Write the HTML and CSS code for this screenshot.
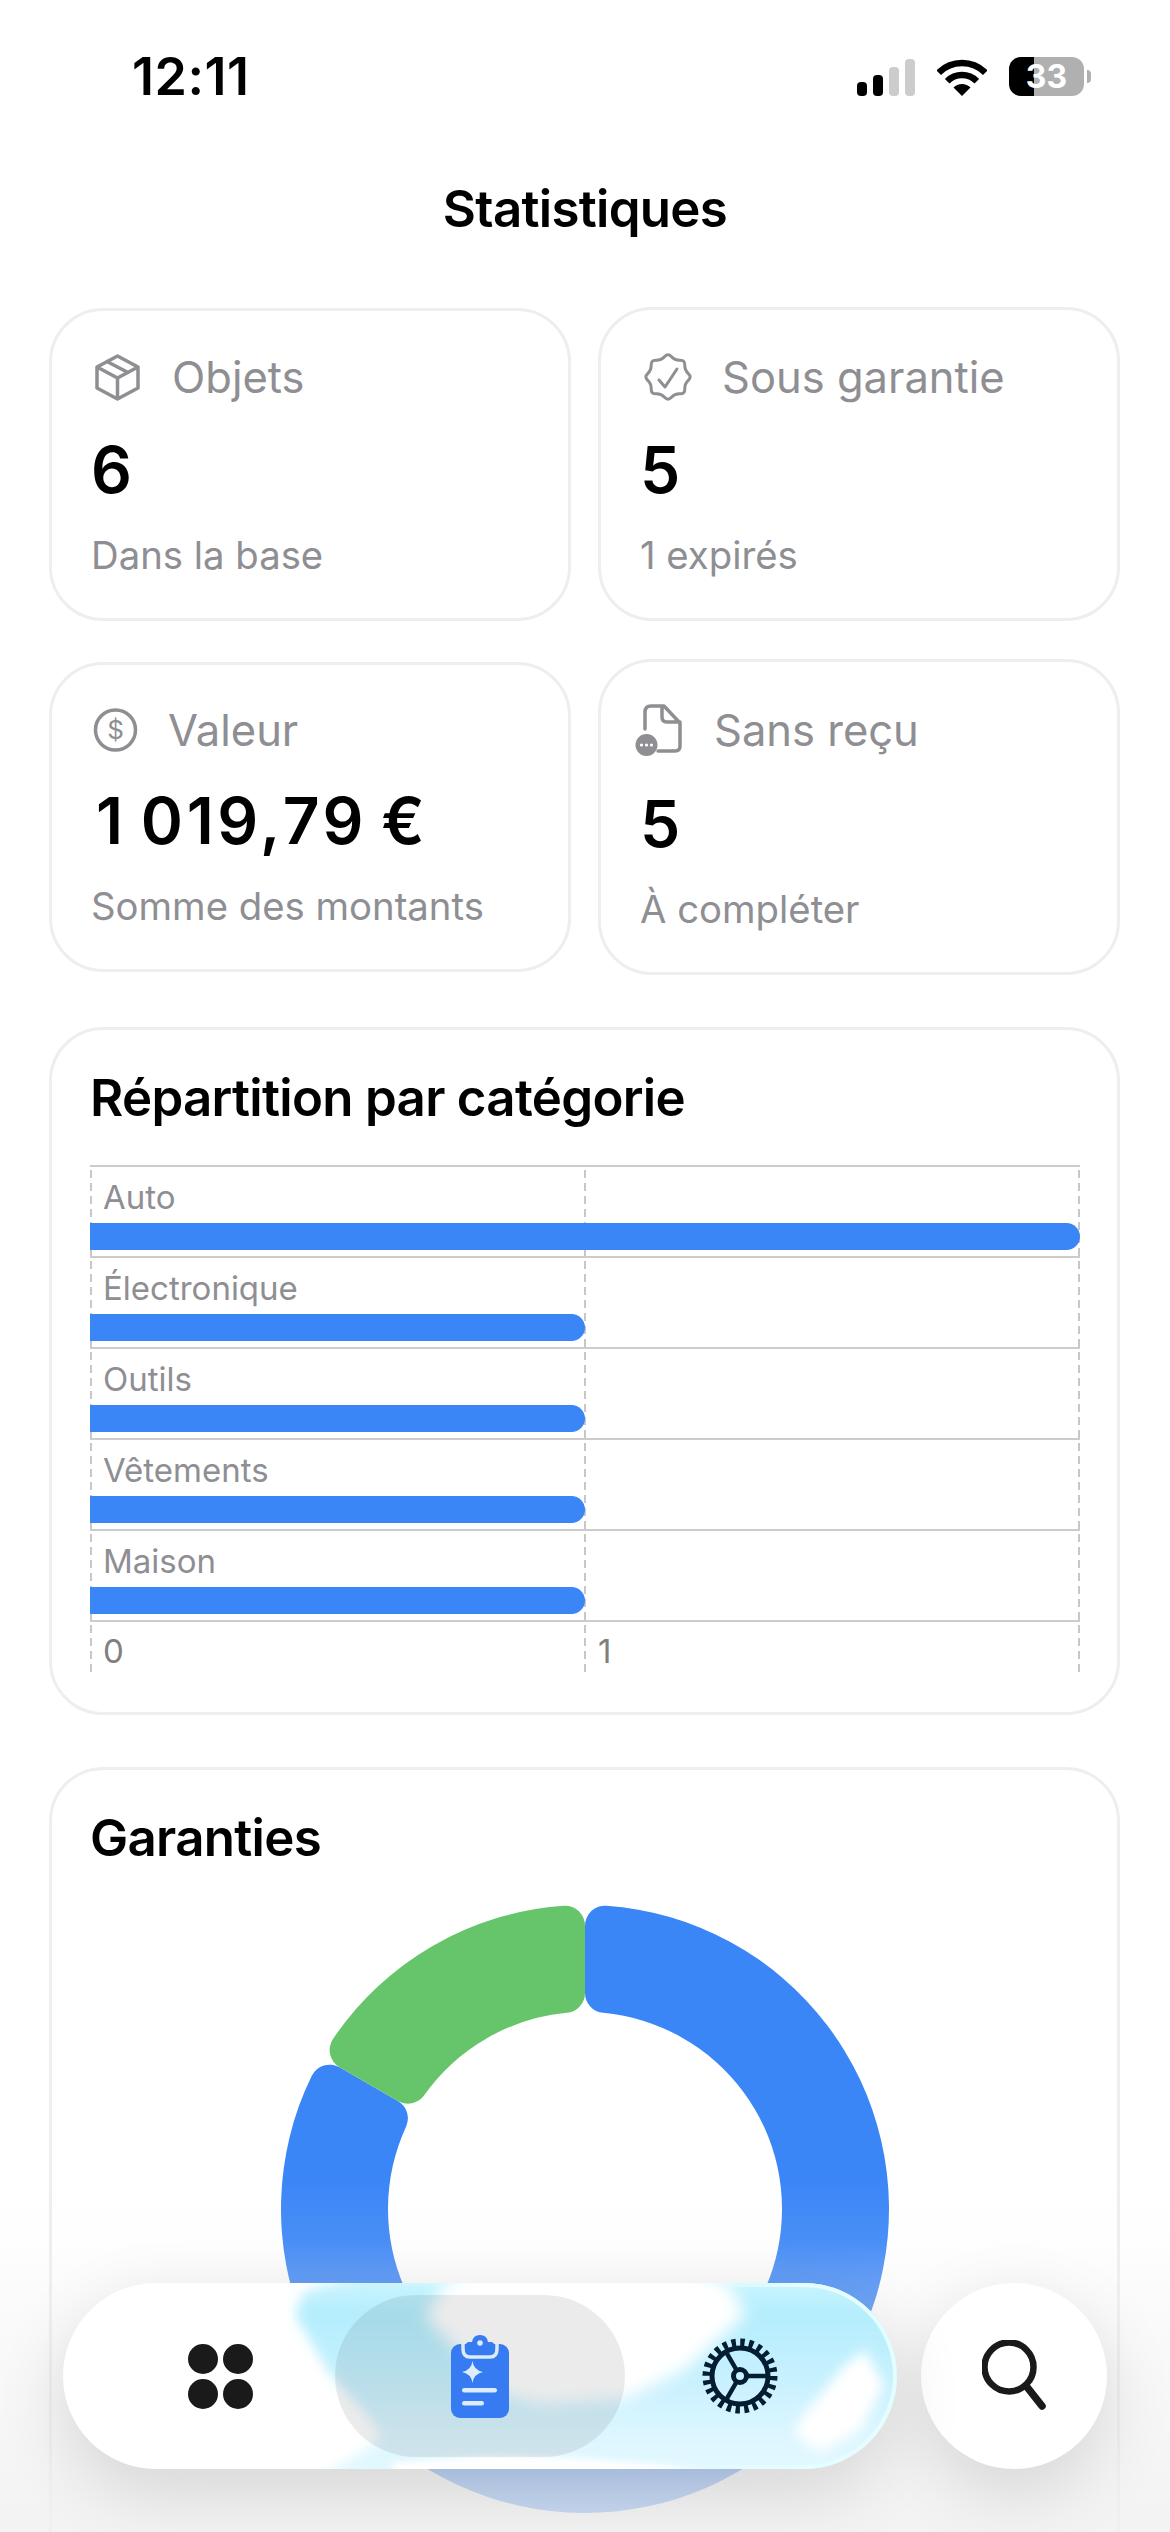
FILE: index.html
```html
<!DOCTYPE html>
<html lang="fr">
<head>
<meta charset="utf-8">
<title>Statistiques</title>
<link rel="stylesheet" href="styles.css">
</head>
<body>
<div class="screen">
  <header class="status">
    <span class="time">12:11</span>
    <div class="status-icons">
      <div class="signal">
        <i class="sig s1"></i><i class="sig s2"></i><i class="sig s3"></i><i class="sig s4"></i>
      </div>
      <svg class="wifi" viewBox="0 0 50 37" width="50" height="37">
        <path d="M1.7 13.7A33 33 0 0 1 48.3 13.7" fill="none" stroke="#000" stroke-width="6.5"/>
        <path d="M10.2 22.2A21 21 0 0 1 39.8 22.2" fill="none" stroke="#000" stroke-width="6.5"/>
        <path d="M25 37L16.5 28.5A12 12 0 0 1 33.5 28.5Z" fill="#000"/>
      </svg>
      <div class="battery"><div class="batt-body">33</div><i class="batt-tip"></i></div>
    </div>
  </header>

  <h1 class="page-title">Statistiques</h1>

  <main class="content">
    <section class="stat-row first">
      <article class="card stat">
        <div class="stat-head">
          <svg class="ico ic-box" viewBox="0 0 45 47" width="45" height="47"><path d="M22.5 2L43 13V34L22.5 45L2 34V13ZM2 13L22.5 24L43 13M22.5 24V45M12 7.5L33 18.5"/></svg>
          <span class="stat-label">Objets</span>
        </div>
        <div class="stat-value">6</div>
        <div class="stat-sub">Dans la base</div>
      </article>
      <article class="card stat">
        <div class="stat-head">
          <svg class="ico ic-badge" viewBox="0 0 50 48" width="50" height="48"><path d="M21.55 3.7Q25 0 28.45 3.7Q31.9 7.4 36.95 7.2Q42 7 41.8 12.05Q41.6 17.1 45.3 20.55Q49 24 45.3 27.45Q41.6 30.9 41.8 35.95Q42 41 36.95 40.8Q31.9 40.6 28.45 44.3Q25 48 21.55 44.3Q18.1 40.6 13.05 40.8Q8 41 8.2 35.95Q8.4 30.9 4.7 27.45Q1 24 4.7 20.55Q8.4 17.1 8.2 12.05Q8 7 13.05 7.2Q18.1 7.4 21.55 3.7ZM16 27L22 34L34 16"/></svg>
          <span class="stat-label">Sous garantie</span>
        </div>
        <div class="stat-value">5</div>
        <div class="stat-sub">1 expirés</div>
      </article>
    </section>

    <section class="stat-row">
      <article class="card stat">
        <div class="stat-head">
          <svg class="ico ic-coin" viewBox="0 0 45 44" width="45" height="44"><circle cx="22.500" cy="22" r="20"/><text class="coin-sign" x="22.500" y="31" text-anchor="middle">$</text></svg>
          <span class="stat-label">Valeur</span>
        </div>
        <div class="stat-value amount">1&#8201;019,79&#8201;€</div>
        <div class="stat-sub">Somme des montants</div>
      </article>
      <article class="card stat">
        <div class="stat-head">
          <svg class="ico ic-doc" viewBox="0 0 47 52" width="47" height="52"><path d="M10 25V8Q10 2 16 2H29L45 19V42Q45 47 40 47H23M27 2V13Q27 18 32 18H45"/><circle class="doc-badge" cx="11.500" cy="41" r="11"/><circle class="doc-dot" cx="6.500" cy="41" r="1.600"/><circle class="doc-dot" cx="11.500" cy="41" r="1.600"/><circle class="doc-dot" cx="16.500" cy="41" r="1.600"/></svg>
          <span class="stat-label">Sans reçu</span>
        </div>
        <div class="stat-value">5</div>
        <div class="stat-sub">À compléter</div>
      </article>
    </section>

    <section class="card panel">
      <h2 class="panel-title">Répartition par catégorie</h2>
      <div class="plot">
        <i class="vline v0"></i><i class="vline v1"></i><i class="vline v2"></i>
        <div class="plot-row"><span class="plot-label">Auto</span><div class="bar full"></div></div>
        <div class="plot-row"><span class="plot-label">Électronique</span><div class="bar half"></div></div>
        <div class="plot-row"><span class="plot-label">Outils</span><div class="bar half"></div></div>
        <div class="plot-row"><span class="plot-label">Vêtements</span><div class="bar half"></div></div>
        <div class="plot-row"><span class="plot-label">Maison</span><div class="bar half"></div></div>
        <div class="plot-axis"><span>0</span><span>1</span></div>
      </div>
    </section>

    <section class="card panel garanties">
      <h2 class="panel-title">Garanties</h2>
      <svg class="donut" viewBox="-304 -304 608 608" width="608" height="608">
        <path class="seg-blue" d="M0 -283.290A20 20 0 0 1 21.410 -303.250A304 304 0 1 1 -273.330 -133.090A20 20 0 0 1 -245.340 -141.650L-187.130 -108.040A20 20 0 0 1 -178.960 -82.340A197 197 0 1 0 18.160 -196.160A20 20 0 0 1 0 -216.080Z"/>
        <path class="seg-green" d="M-245.340 -141.650A20 20 0 0 1 -251.870 -170.240A304 304 0 0 1 -21.410 -303.250A20 20 0 0 1 0 -283.290L0 -216.080A20 20 0 0 1 -18.160 -196.160A197 197 0 0 0 -160.790 -113.820A20 20 0 0 1 -187.130 -108.040Z"/>
      </svg>
      <div class="legend"><span>Actif</span><span>Expiré</span></div>
    </section>
  </main>

  <div class="fade"></div>

  <nav class="dock">
    <div class="tabbar">
      <svg class="glass" viewBox="0 0 834 186" width="834" height="186">
        <defs>
          <linearGradient id="cy" x1="0" y1="0" x2="0" y2="1">
            <stop offset="0" stop-color="#cdf5fe"/>
            <stop offset=".18" stop-color="#b4eefd"/>
            <stop offset=".5" stop-color="#c8f1fe"/>
            <stop offset=".8" stop-color="#dff7ff"/>
            <stop offset="1" stop-color="#e4f9ff"/>
          </linearGradient>
          <linearGradient id="rim" x1="0" y1="0" x2="1" y2="0">
            <stop offset=".75" stop-color="#e4fdff" stop-opacity="0"/>
            <stop offset=".88" stop-color="#e4fdff"/>
          </linearGradient>
          <filter id="b8" x="-20%" y="-20%" width="140%" height="140%"><feGaussianBlur stdDeviation="8"/></filter>
          <filter id="b6" x="-20%" y="-20%" width="140%" height="140%"><feGaussianBlur stdDeviation="6"/></filter>
          <filter id="b3" x="-20%" y="-20%" width="140%" height="140%"><feGaussianBlur stdDeviation="3"/></filter>
        </defs>
        <path fill="url(#cy)" filter="url(#b6)" d="M232 32L240 10L262 2L300 -6H860V200H247L310 162L318 152L304 132L266 90Z"/>
        <path fill="#fff" filter="url(#b8)" d="M362 34L382 0L417 -14H637L667 3L683 32L622 87L560 117L477 122L434 110Z"/>
        <path fill="#fff" filter="url(#b6)" d="M802 67L821 102L797 147L757 169L732 152L737 137L782 82Z"/>
        <path fill="#fff" filter="url(#b3)" d="M330 196L330 180L430 172L510 175L600 182L680 196Z"/>
        <rect x="2" y="2" width="830" height="182" rx="91" fill="none" stroke="url(#rim)" stroke-width="4"/>
      </svg>
      <div class="tab">
        <svg viewBox="0 0 65 65" width="65" height="65"><g class="dots"><circle cx="15" cy="15" r="15"/><circle cx="50" cy="15" r="15"/><circle cx="15" cy="50" r="15"/><circle cx="50" cy="50" r="15"/></g></svg>
      </div>
      <div class="tab active">
        <svg viewBox="0 0 58 83" width="58" height="83">
          <rect class="clip-body" x="0" y="9" width="58" height="74" rx="9"/>
          <path class="clip-cut" d="M12 9V14Q12 22 19 22H39Q46 22 46 14V9"/>
          <path class="clip-top" d="M15 10Q15 7 18 7H21Q22 0 29 0Q36 0 37 7H40Q43 7 43 10V15Q43 18 40 18H18Q15 18 15 15Z"/>
          <circle class="clip-hole" cx="29" cy="8" r="2.800"/>
          <path class="clip-mark" d="M21.500 26Q22.500 35 32 37Q22.500 39 21.500 48Q20.500 39 11 37Q20.500 35 21.500 26Z"/>
          <rect class="clip-mark" x="11" y="53" width="35" height="4.500" rx="2.200"/>
          <rect class="clip-mark" x="11" y="66" width="22" height="4.500" rx="2.200"/>
        </svg>
      </div>
      <div class="tab">
        <svg class="gear" viewBox="0 0 76 76" width="76" height="76">
          <circle class="g-teeth" cx="38" cy="38" r="33"/>
          <circle class="g-ring" cx="38" cy="38" r="28"/>
          <circle class="g-hub" cx="38" cy="38" r="6.500"/>
          <path class="g-spoke" d="M45 38H66M34.500 32L24 13.800M34.500 44L24 62.200"/>
        </svg>
      </div>
    </div>
    <div class="search-btn">
      <svg viewBox="0 0 64 72" width="64" height="72"><circle class="lens" cx="27" cy="27" r="24.500"/><path class="handle" d="M45 47L60 66"/></svg>
    </div>
  </nav>
</div>
</body>
</html>
```
FILE: styles.css
```css
* { box-sizing: border-box; }
html, body {
  margin: 0;
  padding: 0;
  width: 1170px;
  height: 2532px;
  overflow: hidden;
  background: #fff;
}
body {
  font-family: Inter, "Liberation Sans", sans-serif;
  color: #000;
}
.screen {
  position: relative;
  width: 1170px;
  height: 2532px;
  overflow: hidden;
  background: #fff;
}

/* status bar */
.status {
  display: flex;
  justify-content: space-between;
  align-items: flex-end;
  padding: 57px 79px 0 132px;
}
.time {
  font-size: 52px;
  line-height: 39px;
  font-weight: 600;
  letter-spacing: 0.5px;
}
.status-icons {
  display: flex;
  align-items: flex-end;
  gap: 22px;
}
.signal {
  display: flex;
  align-items: flex-end;
  gap: 6px;
}
.sig {
  display: block;
  width: 10px;
  border-radius: 4px;
  background: #000;
}
.s1 { height: 14px; }
.s2 { height: 21px; }
.s3 { height: 29px; background: #ccc; }
.s4 { height: 37px; background: #ccc; }
.wifi { display: block; }
.battery {
  display: flex;
  align-items: center;
  gap: 3px;
}
.batt-body {
  width: 75px;
  height: 39px;
  border-radius: 12px;
  background: linear-gradient(to right, #000 25px, #b0b0b0 25px);
  color: #fff;
  font-size: 32px;
  line-height: 39px;
  font-weight: 700;
  text-align: center;
}
.batt-tip {
  display: block;
  width: 4px;
  height: 13px;
  border-radius: 0 4px 4px 0;
  background: #b0b0b0;
}

.page-title {
  margin: 82px 0 0;
  font-size: 51px;
  line-height: 62px;
  font-weight: 600;
  letter-spacing: -0.7px;
  text-align: center;
}

/* content */
.content {
  display: flex;
  flex-direction: column;
  padding: 67px 50px 0 49px;
}
.card {
  border: 3px solid #eeeeee;
  border-radius: 54px;
  background: #fff;
}
.stat-row {
  display: flex;
  align-items: center;
  gap: 27px;
  margin-bottom: 38px;
}
.stat-row + .panel { margin-top: 14px; }
.stat {
  flex: 1 1 0;
  padding: 43px 39px 39px;
}
.stat-head {
  display: flex;
  align-items: center;
  gap: 29px;
}
.ico {
  display: block;
  flex: none;
  fill: none;
  stroke: #8e8e93;
  stroke-width: 3.5;
  stroke-linejoin: round;
  stroke-linecap: round;
}
.ic-box { margin: 0 3px 0 4px; }
.ic-badge { margin-left: 3px; stroke-width: 3; }
.ic-coin { margin: 0 1px 0 2px; }
.ic-doc { margin: -1px 3px -1px -5px; }
.coin-sign {
  font-family: Inter, sans-serif;
  font-size: 26px;
  fill: #8e8e93;
  stroke: none;
}
.doc-badge { fill: #8e8e93; stroke: none; }
.doc-dot { fill: #fff; stroke: none; }
.stat-label {
  font-size: 43.5px;
  line-height: 44px;
  color: #8e8e93;
}
.stat-value {
  margin-top: 30px;
  font-size: 64px;
  line-height: 78px;
  font-weight: 600;
}
.amount {
  margin-left: 5px;
  letter-spacing: 3.6px;
  white-space: nowrap;
}
.stat-sub {
  margin-top: 23px;
  font-size: 38.3px;
  line-height: 47px;
  color: #8e8e93;
}

/* panels */
.panel {
  padding: 37px 37px 40px 38px;
}
.garanties { margin-top: 52px; }
.panel-title {
  margin: 0 0 36px;
  font-size: 51px;
  line-height: 62px;
  font-weight: 600;
  letter-spacing: -0.7px;
}
.plot {
  position: relative;
}
.vline {
  position: absolute;
  top: 0;
  bottom: 0;
  width: 2px;
  background: repeating-linear-gradient(to top, #c8c8c8 0 8px, transparent 8px 13px);
}
.v0 { left: 0; }
.v1 { left: 494px; }
.v2 { right: 0; }
.plot-row {
  position: relative;
  height: 91px;
  border-top: 2px solid #cccccc;
  padding-top: 10px;
}
.plot-label {
  display: block;
  padding-left: 13px;
  font-size: 33px;
  line-height: 40px;
  color: #8e8e93;
}
.bar {
  height: 27px;
  margin-top: 6px;
  background: #3b86f7;
  border-radius: 0 14px 14px 0;
}
.full { width: 100%; }
.half { width: 50%; }
.plot-axis {
  position: relative;
  display: grid;
  grid-template-columns: 1fr 1fr;
  height: 52px;
  border-top: 2px solid #cccccc;
  padding-top: 9px;
  font-size: 33px;
  line-height: 40px;
  color: #808080;
}
.plot-axis span { padding-left: 13px; }

.donut {
  display: block;
  margin: 0 auto;
}
.seg-blue { fill: #3b86f7; }
.seg-green { fill: #66c56a; }
.legend {
  display: flex;
  gap: 100px;
  margin-top: 13px;
  padding-left: 48px;
  font-size: 33px;
  line-height: 40px;
  color: #8e8e93;
}

/* overlay fade */
.fade {
  position: absolute;
  left: 0;
  right: 0;
  bottom: 0;
  height: 352px;
  background: linear-gradient(to bottom,
    rgba(240,240,240,0) 0,
    rgba(240,240,240,.08) 17%,
    rgba(240,240,240,.2) 26%,
    rgba(240,240,240,.75) 88%,
    rgba(240,240,240,.8) 100%);
}

/* dock */
.dock {
  position: absolute;
  left: 63px;
  right: 63px;
  bottom: 63px;
  display: flex;
  gap: 24px;
}
.tabbar {
  position: relative;
  width: 834px;
  height: 186px;
  flex: none;
  padding: 0 27px;
  display: grid;
  grid-template-columns: repeat(3, 260px);
  align-items: center;
  justify-items: center;
  border-radius: 93px;
  background: #fff;
  overflow: hidden;
  box-shadow: 0 22px 70px rgba(0,0,0,.13);
}
.glass {
  position: absolute;
  left: 0;
  top: 0;
}
.tab {
  position: relative;
  display: flex;
  align-items: center;
  justify-content: center;
}
.tab svg { display: block; }
.tab.active {
  width: 290px;
  height: 162px;
  border-radius: 81px;
  background: rgba(0,0,0,.08);
}
.dots circle { fill: #1a1a1a; }
.clip-body { fill: #377bf2; }
.clip-cut {
  fill: none;
  stroke: #dcecf8;
  stroke-width: 3.5;
}
.clip-top { fill: #377bf2; }
.clip-hole { fill: #dcecf8; }
.clip-mark { fill: #dcecf8; }
.g-teeth {
  fill: none;
  stroke: #051d30;
  stroke-width: 9;
  stroke-dasharray: 4.32 4.32;
}
.g-ring, .g-hub {
  fill: none;
  stroke: #051d30;
  stroke-width: 5;
}
.g-spoke {
  fill: none;
  stroke: #051d30;
  stroke-width: 4.5;
}
.search-btn {
  width: 186px;
  height: 186px;
  flex: none;
  display: flex;
  align-items: center;
  justify-content: center;
  border-radius: 50%;
  background: #fff;
  box-shadow: 0 22px 70px rgba(0,0,0,.13);
}
.search-btn svg { display: block; }
.lens {
  fill: none;
  stroke: #1a1a1a;
  stroke-width: 6.5;
}
.handle {
  fill: none;
  stroke: #1a1a1a;
  stroke-width: 7.5;
  stroke-linecap: round;
}
```
